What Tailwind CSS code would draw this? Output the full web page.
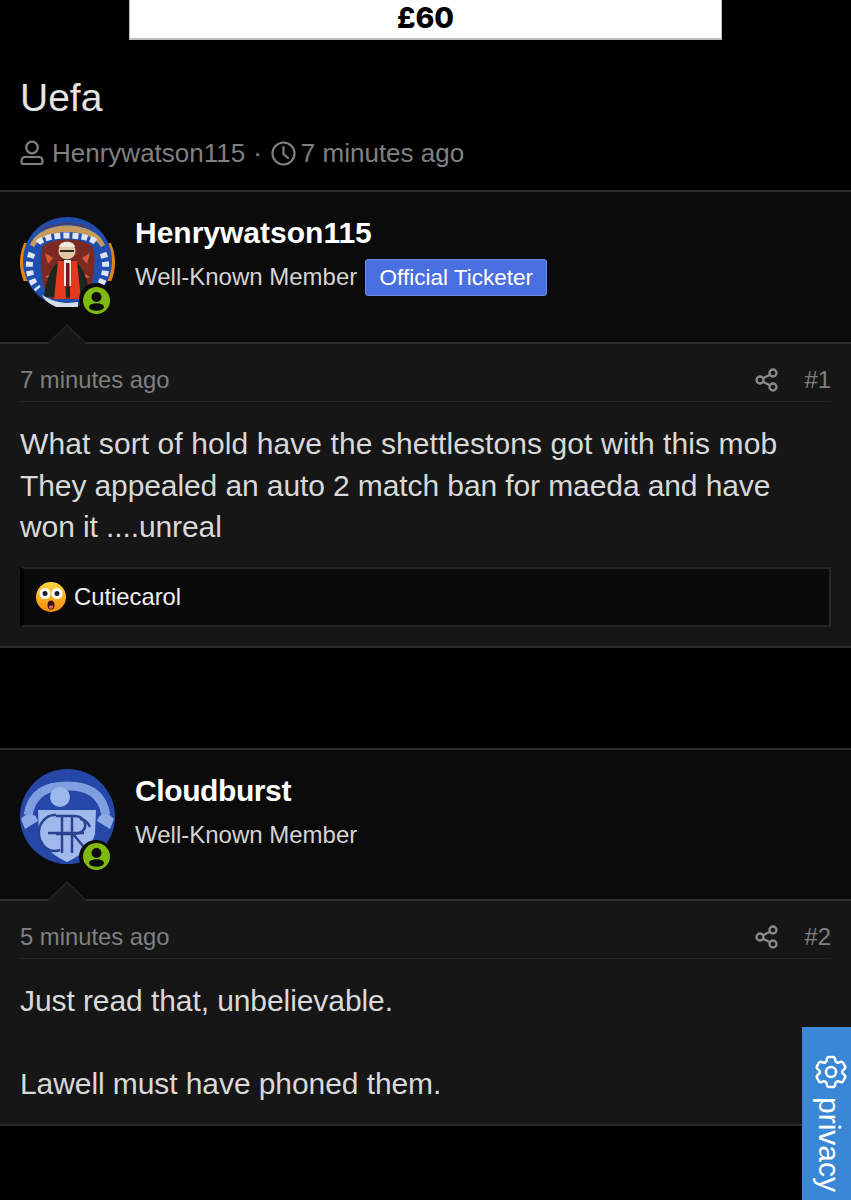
<!DOCTYPE html>
<html>
<head>
<meta charset="utf-8">
<script src="https://cdn.jsdelivr.net/npm/@tailwindcss/browser@4"></script>
</head>
<body class="bg-black">
<div class="relative w-[851px] h-[1200px] overflow-hidden bg-black font-['Liberation_Sans',Arial,sans-serif] text-[#d9d9d9]">

  <div class="ml-[129px] w-[593px] h-[40px] bg-white border-x border-b-2 border-[#bdbdbd] flex items-center justify-center text-black font-['Inter',sans-serif] font-extrabold text-[28.500px] leading-none pb-[2px]">£60</div>

  <div class="px-[20px] pt-[36px] h-[150px]">
    <h1 class="text-[39px] leading-[44px] text-[#e4e4e4]">Uefa</h1>
    <div class="mt-[17px] flex items-center text-[#808080] text-[26px] leading-[32px]">
      <svg class="w-[24px] h-[26px] mr-[8px]" viewBox="0 0 24 26" fill="none" stroke="#808080" stroke-width="2.200"><circle cx="12" cy="7.500" r="5.800"/><path d="M5 17h14a3.500 3.500 0 0 1 3.500 3.500v1.500a2 2 0 0 1-2 2H3.500a2 2 0 0 1-2-2v-1.500A3.500 3.500 0 0 1 5 17z"/></svg>
      <span>Henrywatson115</span>
      <span class="ml-[8px] mr-[9px]">·</span>
      <svg class="w-[25px] h-[25px] mr-[5px]" viewBox="0 0 25 25" fill="none" stroke="#808080" stroke-width="2.200" stroke-linecap="round"><circle cx="12.500" cy="12.500" r="11"/><path d="M12.500 6v7l4.500 4"/></svg>
      <span>7 minutes ago</span>
    </div>
  </div>

  <!-- Post 1 -->
  <article class="border-y-2 border-[#2a2a2a] bg-[#161616]">
    <header class="relative h-[152px] bg-[#0b0b0b] border-b-2 border-[#2e2e2e] px-[20px] pt-[23px] flex">
      <div class="relative w-[95px] h-[95px] shrink-0">
        <svg class="w-[95px] h-[95px]" viewBox="0 0 95 95">
          <defs><clipPath id="av1"><circle cx="47.500" cy="47.500" r="47.500"/></clipPath></defs>
          <g clip-path="url(#av1)">
            <rect width="95" height="95" fill="#0b0b0b"/>
            <rect x="0" y="28" width="95" height="38" fill="#e8820f"/>
            <path d="M47.500 2C72 2 92 21 92 46c0 25-20 46-44.500 46S3 71 3 46C3 21 23 2 47.500 2z" fill="#1f4fae"/>
            <path d="M10 30C20 4 75 4 85 30l-4 2C70 12 25 12 14 32z" fill="#c79a5e"/>
            <path d="M22 14c14-7 37-7 51 0" fill="none" stroke="#7a2b1e" stroke-width="1.500" stroke-dasharray="2 1.500"/>
            <path d="M18 28c8-10 50-10 59 0" fill="none" stroke="#dfe6f2" stroke-width="6" stroke-dasharray="6 3"/>
            <path d="M12 38c-5 12-3 26 6 36M83 38c5 12 3 26-6 36" stroke="#dfe6f2" stroke-width="7" fill="none" stroke-dasharray="5 4"/>
            <path d="M22 32C32 22 63 22 73 32c3 16 1 32-4 46l-6 6H32l-6-6c-5-14-6-30-4-46z" fill="#7a2a22"/>
            <path d="M25 38l8 5-5 6zM70 38l-8 5 5 6zM25 62l8-5 1 8zM70 62l-8-5-1 8z" fill="#d9563a"/>
            <path d="M24 82c2-22 11-38 23-38s21 16 23 38z" fill="#1c261c"/>
            <path d="M34 84l4-38h7l1 38zM50 84l0-38h7l4 38z" fill="#e5391f"/>
            <rect x="44" y="45" width="7" height="26" fill="#f0ece4"/>
            <rect x="46" y="48" width="3.500" height="24" fill="#7a1420"/>
            <circle cx="47" cy="36" r="8.500" fill="#e3c7a4"/>
            <path d="M39 32c1-7 15-7 16 0z" fill="#ece8dd"/>
            <path d="M40 35h14v2H40z" fill="#2b2b2b"/>
            <path d="M22 80c10 6 18 8 26 8l10-1v5H36c-6-3-11-6-14-12z" fill="#d6dde8"/>
          </g>
        </svg>
        <div class="absolute left-[59px] top-[68px] w-[34px] h-[34px] rounded-full bg-[#0b0b0b] flex items-center justify-center">
          <svg class="w-[27px] h-[27px]" viewBox="0 0 27 27"><circle cx="13.500" cy="13.500" r="13.500" fill="#7fb80e"/><circle cx="13.500" cy="10" r="5" fill="#0b0b0b"/><ellipse cx="13.500" cy="20" rx="7.500" ry="3.800" fill="#0b0b0b"/></svg>
        </div>
      </div>
      <div class="ml-[20px]">
        <div class="text-white font-bold text-[30px] leading-[34px] pt-[1px]">Henrywatson115</div>
        <div class="mt-[8px] flex items-center text-[#d4d4d4] text-[24px] leading-[37px]">
          <span>Well-Known Member</span>
          <span class="ml-[8px] translate-y-px h-[37px] w-[182px] justify-center rounded-[3px] bg-[#4a6fe0] border border-[#6f8eea] text-white text-[22.500px] flex items-center">Official Ticketer</span>
        </div>
      </div>
      <svg class="absolute left-[48px] -bottom-[2px] w-[38px] h-[20px]" viewBox="0 0 38 20"><path d="M0 20L19 1l19 19z" fill="#161616"/><path d="M0 19.500L19 1l19 18.500" fill="none" stroke="#232323" stroke-width="1.500"/></svg>
    </header>
    <div class="px-[20px] pt-[17px] pb-[19px]">
      <div class="flex items-center justify-between h-[41px] border-b border-[#252525] pb-[2px] text-[#808080] text-[23.800px]">
        <span>7 minutes ago</span>
        <div class="flex items-center">
          <svg class="w-[24px] h-[24px] mr-[26px]" viewBox="0 0 24 24" fill="none" stroke="#8a8a8a" stroke-width="2.300"><circle cx="18" cy="5" r="3.500"/><circle cx="5" cy="12" r="3.500"/><circle cx="18" cy="19" r="3.500"/><path d="M8 10.300l7-3.600M8 13.700l7 3.600"/></svg>
          <span>#1</span>
        </div>
      </div>
      <div class="mt-[21px] text-[30px] leading-[41.500px] text-[#d9d9d9]">
        <span class="tracking-[0.09px]">What sort of hold have the shettlestons got with this mob</span><br><span class="tracking-[-0.1px]">They appealed an auto 2 match ban for maeda and have</span><br><span class="tracking-[-0.1px]">won it ....unreal</span>
      </div>
      <div class="mt-[19px] h-[60px] bg-[#0a0a0a] border-2 border-[#262626] border-l-[4px] border-l-black flex items-center pl-[12px]">
        <svg class="w-[30px] h-[30px] mr-[8px]" viewBox="0 0 30 30">
          <defs><linearGradient id="g" x1="0" y1="0" x2="0" y2="1"><stop offset="0" stop-color="#ffd83b"/><stop offset="1" stop-color="#f58a0b"/></linearGradient></defs>
          <circle cx="15" cy="15" r="15" fill="url(#g)"/>
          <circle cx="9" cy="11.500" r="5.500" fill="#fff"/><circle cx="21" cy="11.500" r="5.500" fill="#fff"/>
          <circle cx="9" cy="11.500" r="2.500" fill="#1d1d3a"/><circle cx="21" cy="11.500" r="2.500" fill="#1d1d3a"/>
          <ellipse cx="15" cy="23" rx="3.500" ry="4.500" fill="#3a1210"/><ellipse cx="15" cy="25" rx="2.300" ry="1.800" fill="#e8616b"/>
        </svg>
        <span class="text-[#f0f0f0] text-[23.800px]">Cutiecarol</span>
      </div>
    </div>
  </article>

  <!-- Post 2 -->
  <article class="mt-[100px] border-y-2 border-[#2a2a2a] bg-[#161616]">
    <header class="relative h-[151px] bg-[#0b0b0b] border-b-2 border-[#2e2e2e] px-[20px] pt-[19px] flex">
      <div class="relative w-[95px] h-[95px] shrink-0">
        <svg class="w-[95px] h-[95px]" viewBox="0 0 95 95">
          <circle cx="47.500" cy="47.500" r="47.500" fill="#2547a8"/>
          <path d="M8 46C12 24 26 17 47 17s35 7 39 29" fill="none" stroke="#7f9fe0" stroke-width="9"/>
          <circle cx="40" cy="28" r="10" fill="#9db8ec"/>
          <path d="M18 41h58l-1 24c-4 14-17 23-28 28-11-5-24-14-28-28z" fill="#9fb9ec"/>
          <path d="M1 50c6-8 15-6 17 2l-13 8zM94 50c-6-8-15-6-17 2l13 8z" fill="#8eaae6"/>
          <g fill="none" stroke="#2b4290" stroke-width="2.500">
            <path d="M36 46a16 18 0 1 0 4 35"/>
            <path d="M42 46v38M52 46v38M36 47h18c15 0 15 18 0 18H36M53 65l15 18"/>
            <path d="M28 64h36"/>
            <path d="M60 50a13 14 0 0 1 10 8"/>
          </g>
        </svg>
        <div class="absolute left-[59px] top-[71px] w-[34px] h-[34px] rounded-full bg-[#0b0b0b] flex items-center justify-center">
          <svg class="w-[27px] h-[27px]" viewBox="0 0 27 27"><circle cx="13.500" cy="13.500" r="13.500" fill="#7fb80e"/><circle cx="13.500" cy="10" r="5" fill="#0b0b0b"/><ellipse cx="13.500" cy="20" rx="7.500" ry="3.800" fill="#0b0b0b"/></svg>
        </div>
      </div>
      <div class="ml-[20px]">
        <div class="text-white font-bold text-[30px] leading-[34px] pt-[5px] tracking-[-0.4px]">Cloudburst</div>
        <div class="mt-[8px] text-[#d4d4d4] text-[24px] leading-[37px]">Well-Known Member</div>
      </div>
      <svg class="absolute left-[48px] -bottom-[2px] w-[38px] h-[20px]" viewBox="0 0 38 20"><path d="M0 20L19 1l19 19z" fill="#161616"/><path d="M0 19.500L19 1l19 18.500" fill="none" stroke="#232323" stroke-width="1.500"/></svg>
    </header>
    <div class="px-[20px] pt-[17px] pb-[20px]">
      <div class="flex items-center justify-between h-[41px] border-b border-[#252525] pb-[2px] text-[#808080] text-[23.800px]">
        <span>5 minutes ago</span>
        <div class="flex items-center">
          <svg class="w-[24px] h-[24px] mr-[26px]" viewBox="0 0 24 24" fill="none" stroke="#8a8a8a" stroke-width="2.300"><circle cx="18" cy="5" r="3.500"/><circle cx="5" cy="12" r="3.500"/><circle cx="18" cy="19" r="3.500"/><path d="M8 10.300l7-3.600M8 13.700l7 3.600"/></svg>
          <span>#2</span>
        </div>
      </div>
      <div class="mt-[21px] text-[30px] leading-[41.500px] text-[#d9d9d9] tracking-[-0.08px]">
        Just read that, unbelievable.<br><br>Lawell must have phoned them.
      </div>
    </div>
  </article>

  <!-- Privacy tab -->
  <div class="absolute left-[802px] top-[1027px] w-[49px] h-[173px] bg-[#3a87d6] text-white">
    <svg class="absolute left-[9px] top-[25px] w-[40px] h-[40px]" viewBox="0 0 24 24" fill="none" stroke="#fff" stroke-width="1.500" stroke-linecap="round" stroke-linejoin="round"><path d="M9.590 3.940c.09-.54.56-.94 1.110-.94h2.590c.55 0 1.020.4 1.110.94l.210 1.280c.06.37.310.68.650.87l.240.140c.32.190.720.250 1.080.110l1.210-.450c.510-.190 1.090.01 1.370.490l1.300 2.240c.270.480.160 1.080-.260 1.430l-1 .820c-.29.240-.43.600-.420.970v.280c-.01.370.130.730.420.970l1 .820c.420.350.530.950.260 1.430l-1.300 2.240c-.280.480-.860.680-1.370.490l-1.210-.450c-.360-.140-.760-.080-1.080.110l-.240.140c-.34.190-.590.500-.650.870l-.210 1.280c-.09.540-.56.940-1.110.94h-2.590c-.55 0-1.020-.4-1.110-.94l-.210-1.280c-.06-.37-.310-.68-.650-.87l-.240-.140c-.32-.190-.720-.250-1.080-.110l-1.210.450c-.510.190-1.090-.01-1.370-.490l-1.300-2.240c-.270-.480-.160-1.080.260-1.430l1-.820c.29-.240.430-.600.420-.970v-.280c.01-.370-.130-.730-.420-.970l-1-.820c-.420-.350-.530-.950-.260-1.430l1.300-2.240c.280-.480.860-.680 1.370-.490l1.210.450c.360.140.760.080 1.080-.110l.240-.140c.34-.190.590-.500.650-.870z"/><circle cx="12" cy="12" r="3"/></svg>
    <span class="absolute left-[10px] top-[70px] [writing-mode:vertical-rl] text-[30px] leading-[34px]">privacy</span>
  </div>
</div>
</body>
</html>
